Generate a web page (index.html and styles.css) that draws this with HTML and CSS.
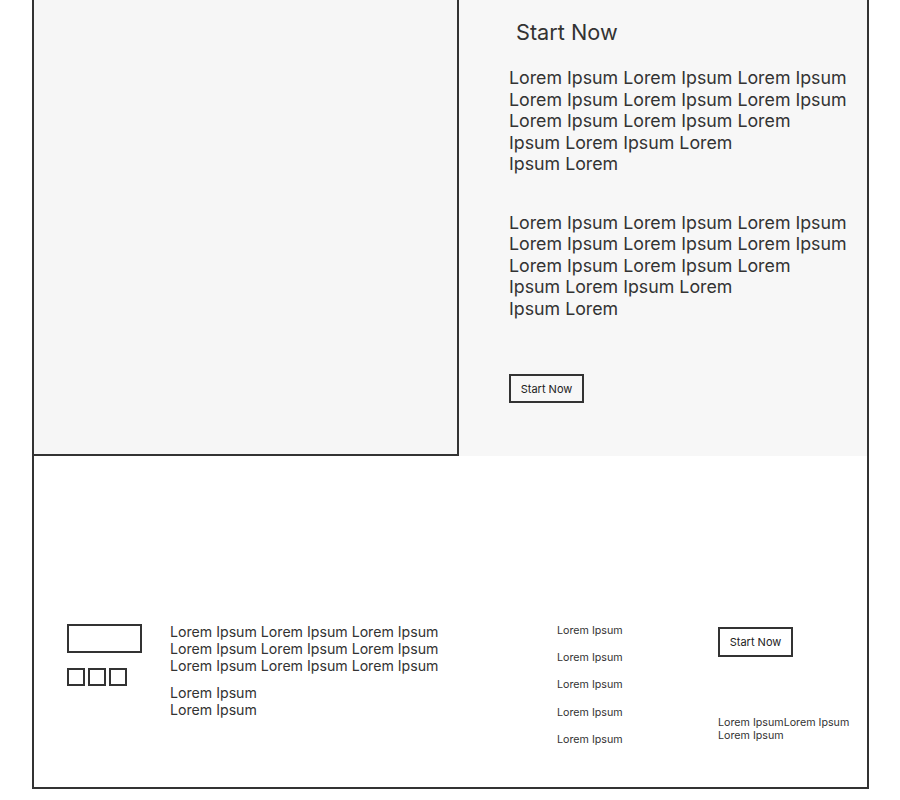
FILE: index.html
```html
<!DOCTYPE html>
<html>
<head>
<meta charset="utf-8">
<link rel="stylesheet" href="styles.css">
</head>
<body>
<div class="frame">
  <section class="hero">
    <div class="hero-img"></div>
    <div class="hero-text">
      <h2 class="hero-title">Start Now</h2>
      <p class="hero-para">Lorem Ipsum Lorem Ipsum Lorem Ipsum<br>Lorem Ipsum Lorem Ipsum Lorem Ipsum<br>Lorem Ipsum Lorem Ipsum Lorem<br>Ipsum Lorem Ipsum Lorem<br>Ipsum Lorem</p>
      <p class="hero-para second">Lorem Ipsum Lorem Ipsum Lorem Ipsum<br>Lorem Ipsum Lorem Ipsum Lorem Ipsum<br>Lorem Ipsum Lorem Ipsum Lorem<br>Ipsum Lorem Ipsum Lorem<br>Ipsum Lorem</p>
      <button class="btn hero-btn">Start Now</button>
    </div>
  </section>
  <footer class="footer">
    <div class="brand">
      <div class="logo"></div>
      <div class="socials"><span class="sq"></span><span class="sq"></span><span class="sq"></span></div>
    </div>
    <div class="about">
      <p class="about-main">Lorem Ipsum Lorem Ipsum Lorem Ipsum<br>Lorem Ipsum Lorem Ipsum Lorem Ipsum<br>Lorem Ipsum Lorem Ipsum Lorem Ipsum</p>
      <p class="about-sub">Lorem Ipsum<br>Lorem Ipsum</p>
    </div>
    <ul class="nav">
      <li>Lorem Ipsum</li>
      <li>Lorem Ipsum</li>
      <li>Lorem Ipsum</li>
      <li>Lorem Ipsum</li>
      <li>Lorem Ipsum</li>
    </ul>
    <div class="cta">
      <button class="btn cta-btn">Start Now</button>
      <p class="cta-text">Lorem IpsumLorem Ipsum<br>Lorem Ipsum</p>
    </div>
  </footer>
</div>
</body>
</html>
```

FILE: styles.css
```css
* { box-sizing: border-box; }
body {
  margin: 0;
  background: #fff;
  font-family: Inter, "Noto Sans", sans-serif;
  color: #333;
}
.frame {
  margin-left: 32px;
  width: 837px;
  height: 789px;
  border: 2px solid #333;
  border-top: none;
  display: flex;
  flex-direction: column;
}
.hero {
  display: flex;
  height: 456px;
}
.hero-img {
  width: 425px;
  background: #f6f6f6;
  border-right: 2px solid #333;
  border-bottom: 2px solid #333;
}
.hero-text {
  flex: 1;
  background: #f7f7f7;
  padding: 18px 0 0 50px;
}
.hero-title {
  margin: 0 0 0 7px;
  font-size: 21.7px;
  font-weight: 400;
  line-height: 28px;
}
.hero-para {
  margin: 21px 0 0;
  font-size: 17.8px;
  line-height: 21.5px;
}
.hero-para.second {
  margin-top: 37px;
}
.btn {
  font-family: Inter, "Noto Sans", sans-serif;
  background: transparent;
  border: 2px solid #333;
  color: #222;
  font-size: 11px;
  padding: 0;
}
.hero-btn {
  margin-top: 55px;
  width: 75px;
  height: 29px;
}
.footer {
  flex: 1;
  display: grid;
  grid-template-columns: 103px 387px 161px 1fr;
  padding: 168px 0 0 33px;
  align-items: start;
}
.logo {
  width: 75px;
  height: 29px;
  border: 2px solid #333;
}
.socials {
  display: flex;
  gap: 3px;
  margin-top: 15px;
}
.sq {
  width: 18px;
  height: 18px;
  border: 2px solid #333;
}
.about p { margin: 0; font-size: 14.15px; line-height: 17px; }
.about .about-main { margin-top: -1px; }
.about .about-sub { margin-top: 10px; }
.nav {
  list-style: none;
  margin: 0;
  padding: 0;
  font-size: 10.7px;
  line-height: 14px;
}
.nav li { margin-bottom: 13.2px; }
.cta-btn {
  margin-top: 3px;
  width: 75px;
  height: 30px;
  font-size: 11px;
}
.cta-text {
  margin: 59px 0 0;
  font-size: 10.7px;
  line-height: 13px;
}
```
